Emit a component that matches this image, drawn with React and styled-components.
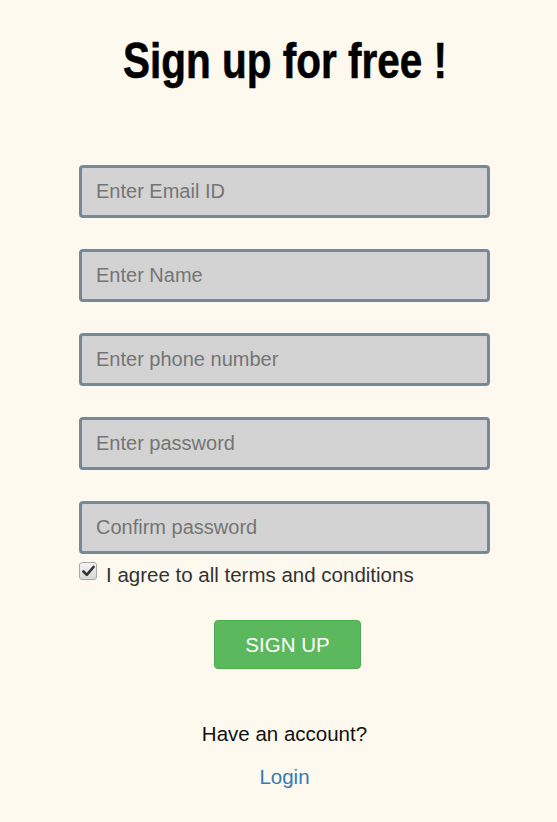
import React from 'react';
import styled, { createGlobalStyle } from 'styled-components';

const Global = createGlobalStyle`
	body {
		margin: 0;
		background: #fef9ee;
		font-family: "Liberation Sans", Arial, sans-serif;
	}
`;

const Page = styled.div`
	width: 557px;
	min-height: 822px;
	display: flex;
	flex-direction: column;
	align-items: center;
	box-sizing: border-box;
	padding-top: 34px;
	padding-left: 12px;
`;

const Title = styled.h1`
	margin: 0;
	font-family: "Liberation Sans", Arial, sans-serif;
	font-weight: 700;
	font-size: 50px;
	line-height: 54px;
	color: #000;
	transform: scaleX(0.81);
	-webkit-text-stroke: 0.6px #000;
`;

const Form = styled.form`
	width: 411px;
	margin-top: 77px;
	display: flex;
	flex-direction: column;
	gap: 31px;
`;

const Field = styled.input`
	width: 100%;
	height: 53px;
	box-sizing: border-box;
	border: 3px solid #778899;
	border-radius: 4px;
	background: #d3d3d3;
	padding: 0 14px;
	font-family: "Liberation Sans", Arial, sans-serif;
	font-size: 20px;
	color: #333;
	outline: none;
	&::placeholder { color: #757575; }
`;

const Agree = styled.label`
	display: flex;
	align-items: center;
	gap: 9px;
	margin-top: -22px;
	font-size: 20.5px;
	color: #333;
`;

const Box = styled.span`
	width: 16px;
	height: 16px;
	border: 1px solid #a9a9a9;
	border-radius: 3px;
	background: linear-gradient(#f4f4f4, #d8d8d8);
	display: flex;
	align-items: center;
	justify-content: center;
	margin-top: -8px;
`;

const Submit = styled.button`
	align-self: center;
	width: 147px;
	height: 49px;
	margin: 2px 0 0 6px;
	border: 1px solid #4cae4c;
	border-radius: 4px;
	background: #5cb85c;
	color: #fff;
	font-family: "Liberation Sans", Arial, sans-serif;
	font-size: 20.5px;
`;

const Footer = styled.div`
	margin-top: 53px;
	display: flex;
	flex-direction: column;
	align-items: center;
	gap: 19px;
	font-size: 20.5px;
	color: #111;
`;

const LoginLink = styled.a`
	color: #337ab7;
	text-decoration: none;
`;

const fields = [
	'Enter Email ID',
	'Enter Name',
	'Enter phone number',
	'Enter password',
	'Confirm password',
];

export default function App() {
	return (
		<Page>
			<Global />
			<Title>Sign up for free !</Title>
			<Form onSubmit={(e) => e.preventDefault()}>
				{fields.map((f) => (
					<Field key={f} placeholder={f} type={f.includes('password') ? 'password' : 'text'} />
				))}
				<Agree>
					<Box>
						<svg width="13" height="12" viewBox="0 0 13 12">
							<path d="M1.5 6.5 L4.8 9.8 L11.5 2" fill="none" stroke="#333" strokeWidth="2.6" strokeLinecap="round" strokeLinejoin="round" />
						</svg>
					</Box>
					I agree to all terms and conditions
				</Agree>
				<Submit type="submit">SIGN UP</Submit>
			</Form>
			<Footer>
				<span>Have an account?</span>
				<LoginLink href="#">Login</LoginLink>
			</Footer>
		</Page>
	);
}
